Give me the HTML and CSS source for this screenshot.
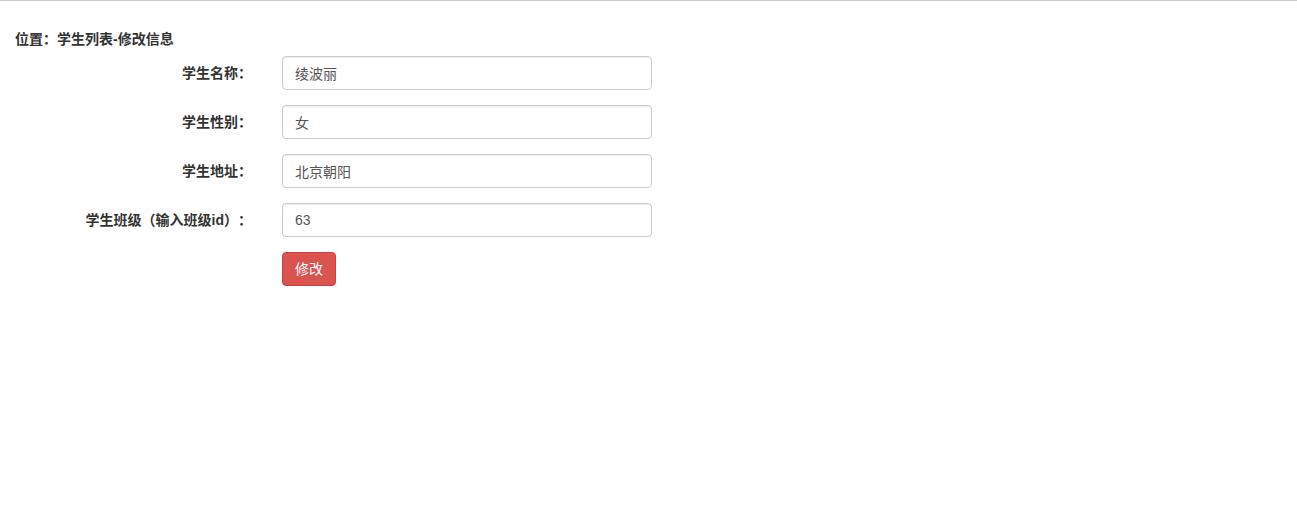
FILE: index.html
```html
<!DOCTYPE html>
<html lang="zh-CN">
<head>
<meta charset="utf-8">
<title>修改信息</title>
<link rel="stylesheet" href="styles.css">
</head>
<body>
<div class="page">
  <div class="place">位置：学生列表-修改信息</div>
  <form class="edit-form">
    <div class="row">
      <label class="row-label" for="name">学生名称：</label>
      <input class="field" id="name" type="text" value="绫波丽">
    </div>
    <div class="row">
      <label class="row-label" for="sex">学生性别：</label>
      <input class="field" id="sex" type="text" value="女">
    </div>
    <div class="row">
      <label class="row-label" for="addr">学生地址：</label>
      <input class="field" id="addr" type="text" value="北京朝阳">
    </div>
    <div class="row">
      <label class="row-label" for="cls">学生班级（输入班级id）：</label>
      <input class="field" id="cls" type="text" value="63">
    </div>
    <div class="row">
      <span class="row-label"></span>
      <div><button class="btn-danger" type="button">修改</button></div>
    </div>
  </form>
</div>
</body>
</html>
```

FILE: styles.css
```css
* { box-sizing: border-box; }
html, body { margin: 0; padding: 0; background: #fff; }
body {
  font-family: "Helvetica Neue", "Liberation Sans", "Noto Sans CJK SC", sans-serif;
  font-size: 14px;
  line-height: 20px;
  color: #333;
  border-top: 1px solid #cccccc;
  text-spacing-trim: space-all;
}
.page { padding: 28px 15px 0 15px; }
.place {
  font-weight: bold;
  font-size: 14px;
  line-height: 20px;
  margin-bottom: 7px;
}
.edit-form { display: flex; flex-direction: column; gap: 15px; }
.row {
  display: grid;
  grid-template-columns: 237px 370px;
  column-gap: 30px;
  align-items: start;
}
.row-label {
  text-align: right;
  font-weight: bold;
  padding-top: 7px;
  line-height: 20px;
}
.field {
  display: block;
  width: 370px;
  height: 34px;
  padding: 6px 12px;
  font-family: inherit;
  font-size: 14px;
  line-height: 20px;
  color: #555;
  background: #fff;
  border: 1px solid #ccc;
  border-radius: 4px;
  box-shadow: inset 0 1px 1px rgba(0,0,0,.075);
  outline: none;
}
.btn-danger {
  display: inline-block;
  height: 34px;
  padding: 6px 12px;
  font-family: inherit;
  font-size: 14px;
  line-height: 20px;
  color: #fff;
  background: #d9534f;
  border: 1px solid #d43f3a;
  border-radius: 4px;
  cursor: pointer;
}
```
